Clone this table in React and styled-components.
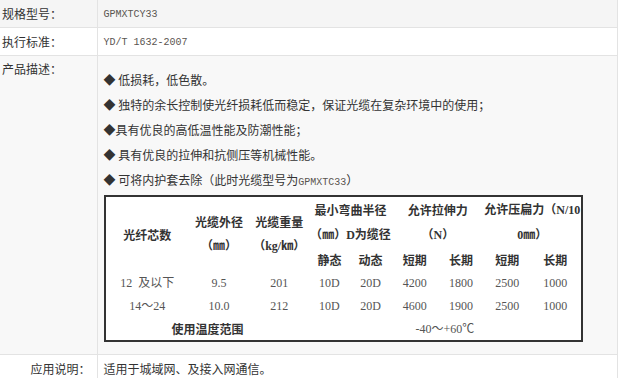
import React from "react";
import styled, { createGlobalStyle } from "styled-components";

const GlobalStyle = createGlobalStyle`
  body {
    margin: 0;
    background: #fff;
    font-family: "Noto Sans CJK SC", "Noto Sans", sans-serif;
    font-size: 12px;
    color: #333;
  }
`;

const SpecTable = styled.table`
  width: 618px;
  border-collapse: collapse;
  table-layout: fixed;
`;

const Row = styled.tr`
  background: ${(p) => p.$bg || "#fff"};
`;

const Label = styled.td`
  width: 97px;
  box-sizing: border-box;
  padding: ${(p) => (p.$top ? "4px 6px 0 2px" : "0 6px 0 2px")};
  height: 27px;
  text-align: ${(p) => (p.$right ? "right" : "left")};
  vertical-align: ${(p) => (p.$top ? "top" : "middle")};
  line-height: 18px;
  border-right: 1px solid #e3e3e3;
  border-bottom: 1px solid #e3e3e3;
`;

const Value = styled.td`
  padding: ${(p) => (p.$pad ? "11px 0 12px 6px" : "0 0 0 6px")};
  height: 27px;
  vertical-align: ${(p) => (p.$pad ? "top" : "middle")};
  line-height: 18px;
  border-right: 1px solid #e3e3e3;
  border-bottom: 1px solid #e3e3e3;
`;

const Code = styled.span`
  font-family: "Liberation Mono", monospace;
  font-size: 10px;
  color: #5a5550;
`;

const Bullets = styled.div`
  line-height: 25px;
`;

const Line = styled.div`
  white-space: nowrap;
`;

const Data = styled.table`
  width: 479px;
  border: 2px solid #333;
  border-collapse: collapse;
  table-layout: fixed;
`;

const Head = styled.td`
  height: ${(p) => p.$h || 23}px;
  padding: 0;
  text-align: center;
  vertical-align: middle;
  font-weight: bold;
  line-height: 23px;
  white-space: nowrap;
  color: #333;
  background: #fff;
`;

const Cell = styled.td`
  height: 23px;
  padding: 0;
  text-align: center;
  vertical-align: middle;
  white-space: pre;
  font-family: "Liberation Serif", "Noto Sans CJK SC", serif;
  font-size: 12px;
  color: #555;
  background: #fff;
`;

const Unit = styled.span`
  font-family: "Liberation Serif", "Noto Sans CJK SC", serif;
`;

const cols = [84, 60, 60, 40, 42, 46, 46, 46, 51];

const rows = [
  ["12  及以下", "9.5", "201", "10D", "20D", "4200", "1800", "2500", "1000"],
  ["14～24", "10.0", "212", "10D", "20D", "4600", "1900", "2500", "1000"],
];

const bullets = [
  "◆ 低损耗，低色散。",
  "◆ 独特的余长控制使光纤损耗低而稳定，保证光缆在复杂环境中的使用；",
  "◆具有优良的高低温性能及防潮性能；",
  "◆ 具有优良的拉伸和抗侧压等机械性能。",
];

export default function App() {
  return (
    <>
      <GlobalStyle />
      <SpecTable>
        <tbody>
          <Row $bg="#f5f5f5">
            <Label>规格型号：</Label>
            <Value>
              <Code>GPMXTCY33</Code>
            </Value>
          </Row>
          <Row>
            <Label>执行标准：</Label>
            <Value>
              <Code>YD/T 1632-2007</Code>
            </Value>
          </Row>
          <Row $bg="#f8f8f8">
            <Label $top>产品描述：</Label>
            <Value $pad>
              <Bullets>
                {bullets.map((b) => (
                  <Line key={b}>{b}</Line>
                ))}
                <Line>
                  ◆ 可将内护套去除（此时光缆型号为<Code>GPMXTC33</Code>）
                </Line>
              </Bullets>
              <Data>
                <colgroup>
                  {cols.map((w, i) => (
                    <col key={i} style={{ width: w }} />
                  ))}
                </colgroup>
                <tbody>
                  <tr>
                    <Head rowSpan={3}>光纤芯数</Head>
                    <Head rowSpan={3}>
                      光缆外径
                      <br />
                      （<Unit>㎜</Unit>）
                    </Head>
                    <Head rowSpan={3}>
                      光缆重量
                      <br />
                      （<Unit>kg/㎞</Unit>）
                    </Head>
                    <Head colSpan={2}>最小弯曲半径</Head>
                    <Head colSpan={2}>允许拉伸力</Head>
                    <Head colSpan={2}>
                      允许压扁力（<Unit>N/10</Unit>
                    </Head>
                  </tr>
                  <tr>
                    <Head colSpan={2}>
                      （<Unit>㎜</Unit>）<Unit>D</Unit>为缆径
                    </Head>
                    <Head colSpan={2}>
                      （<Unit>N</Unit>）
                    </Head>
                    <Head colSpan={2}>
                      <Unit>0㎜</Unit>）
                    </Head>
                  </tr>
                  <tr>
                    <Head $h={24}>静态</Head>
                    <Head $h={24}>动态</Head>
                    <Head $h={24}>短期</Head>
                    <Head $h={24}>长期</Head>
                    <Head $h={24}>短期</Head>
                    <Head $h={24}>长期</Head>
                  </tr>
                  {rows.map((r) => (
                    <tr key={r[0]}>
                      {r.map((c, i) => (
                        <Cell key={i}>{c}</Cell>
                      ))}
                    </tr>
                  ))}
                  <tr>
                    <Head colSpan={3}>使用温度范围</Head>
                    <Cell colSpan={6}>-40～+60℃</Cell>
                  </tr>
                </tbody>
              </Data>
            </Value>
          </Row>
          <Row>
            <Label $right>应用说明：</Label>
            <Value>适用于城域网、及接入网通信。</Value>
          </Row>
        </tbody>
      </SpecTable>
    </>
  );
}
